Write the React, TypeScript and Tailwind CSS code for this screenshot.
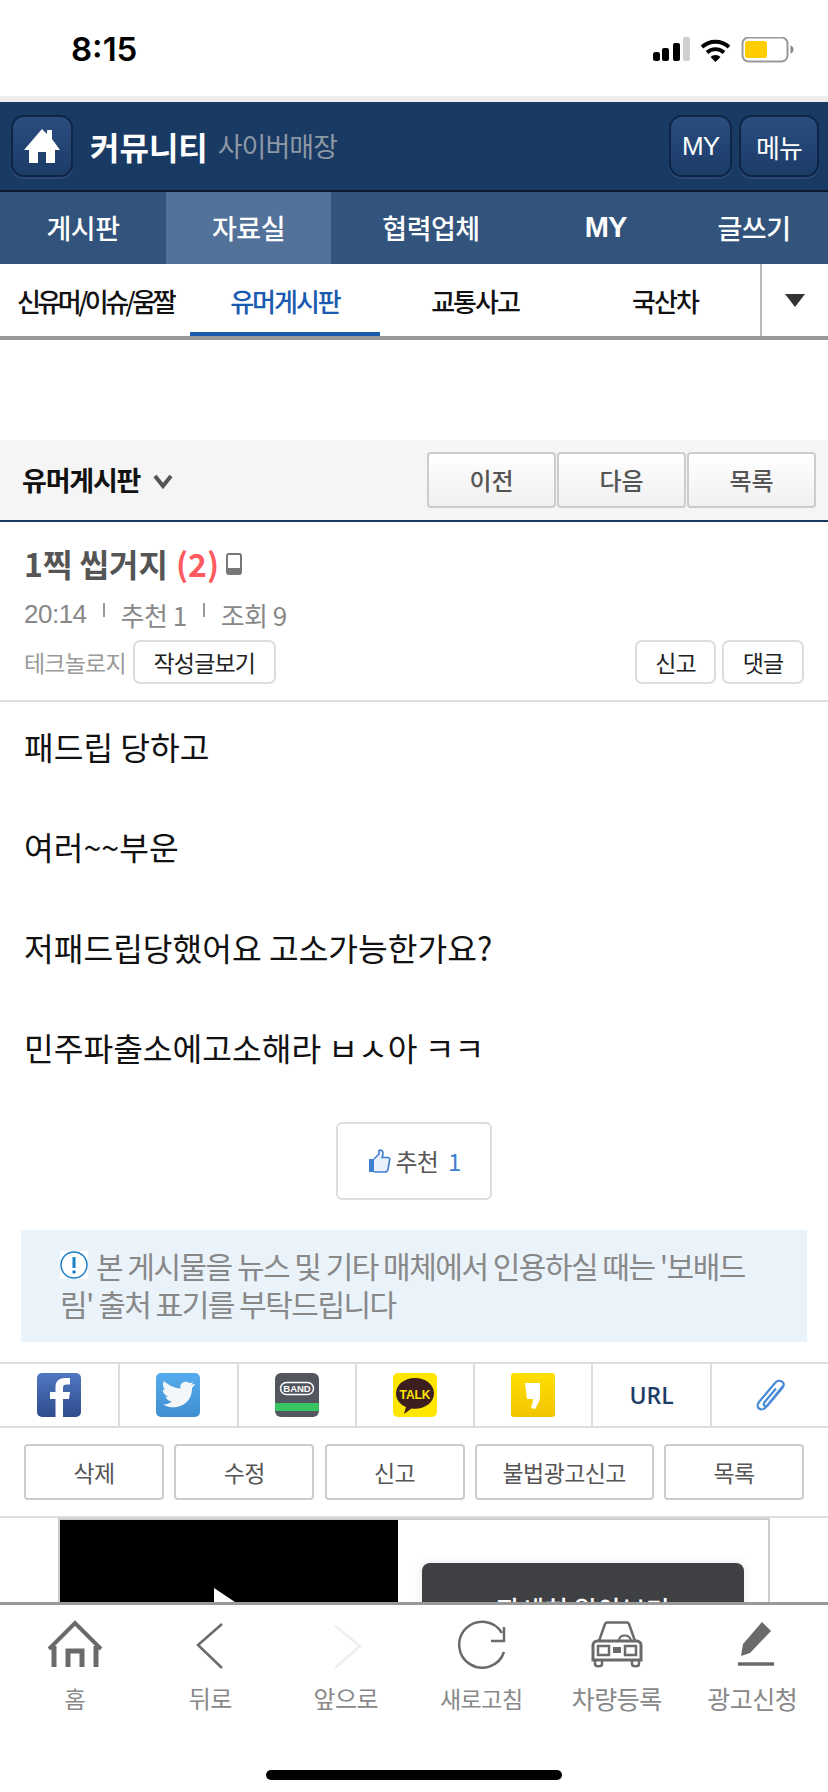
import type { ReactNode } from 'react';

const FONT = "font-['Noto_Sans_CJK_KR','Noto_Sans',sans-serif]";

const MAIN_TABS = [
  { label: '게시판', width: 'w-[166px]' },
  { label: '자료실', width: 'w-[165px]', active: true },
  { label: '협력업체', width: 'w-[200px]' },
  { label: 'MY', width: 'w-[149px]', latin: true },
  { label: '글쓰기', width: 'flex-1' },
];

const SUB_TABS = [
  { label: '신유머/이슈/움짤', tight: true },
  { label: '유머게시판', active: true },
  { label: '교통사고' },
  { label: '국산차' },
];

const POST_LINES = ['패드립 당하고', '여러~~부운', '저패드립당했어요 고소가능한가요?', '민주파출소에고소해라 ㅂㅅ아 ㅋㅋ'];

function StatusBar() {
  return (
    <div className="flex h-[96px] items-center bg-white pl-[71px] pr-[32px] pt-[4px]">
      <span className="font-['Inter',sans-serif] text-[33px] font-semibold text-black">8:15</span>
      <svg width="144" height="26" viewBox="0 0 144 26" className="ml-auto">
        <rect x="1" y="15" width="7" height="9" rx="2.500" fill="#000" />
        <rect x="10" y="11" width="7" height="13" rx="2" fill="#000" />
        <rect x="21" y="6" width="7" height="18" rx="2" fill="#000" />
        <rect x="31" y="0" width="7" height="24" rx="2" fill="#cfcfcf" />
        <path d="M50 10a20 20 0 0 1 27 0M55 15.500a12.500 12.500 0 0 1 17 0" fill="none" stroke="#000" strokeWidth="3.800" />
        <path d="M58.500 20a7 7 0 0 1 10 0l-5 5z" fill="#000" />
        <rect x="90.500" y="0.500" width="45" height="24" rx="6" fill="none" stroke="#999" strokeWidth="2" />
        <rect x="93" y="4" width="22" height="17" rx="2.500" fill="#ffcc00" />
        <path d="M138.500 8.500c2 .5 3 2.200 3 4s-1 3.500-3 4z" fill="#888" />
      </svg>
    </div>
  );
}

function NavyButton({ className, children }: { className: string; children: ReactNode }) {
  return (
    <div
      className={`flex h-[62px] items-center justify-center rounded-[13px] border-2 border-[#0f2545] bg-gradient-to-b from-[#2a4d7f] to-[#1c3c68] text-white shadow-[0_2px_0_#2a4a75] ${className}`}
    >
      {children}
    </div>
  );
}

function Header() {
  return (
    <div className="flex h-[90px] items-center border-b-2 border-[#0c1a2e] bg-[#193a63] pl-[11px] pr-[9px]">
      <NavyButton className="w-[62px]">
        <svg width="36" height="34" viewBox="0 0 36 34">
          <path d="M18 0l5 5V1h5v9l8 11h-5v13H22V23h-8v11H5V21H0z" fill="#fff" />
        </svg>
      </NavyButton>
      <span className="ml-[17px] text-[32px] font-bold text-white">커뮤니티</span>
      <span className="ml-[10px] text-[27px] tracking-[-1px] text-[#8d97a5]">사이버매장</span>
      <div className="ml-auto flex gap-[7px]">
        <NavyButton className="w-[63px] text-[26px]">
          <span className="font-['Liberation_Sans',sans-serif] tracking-[-1px]">MY</span>
        </NavyButton>
        <NavyButton className="w-[80px] text-[26px]">
          <span className="tracking-[-1px]">메뉴</span>
        </NavyButton>
      </div>
    </div>
  );
}

function MainTabs() {
  return (
    <div className="flex h-[72px] bg-[#32547c]">
      {MAIN_TABS.map((tab) => (
        <div
          key={tab.label}
          className={`flex items-center justify-center text-[27px] text-white ${tab.width} ${
            tab.active ? 'bg-[#527299]' : ''
          } ${
            tab.latin
              ? "font-['Liberation_Sans',sans-serif] text-[29px] font-bold tracking-[-1px]"
              : 'font-medium tracking-[-0.5px]'
          }`}
        >
          {tab.label}
        </div>
      ))}
    </div>
  );
}

function SubTabs() {
  return (
    <div className="flex h-[76px] border-b-4 border-[#999] bg-white">
      {SUB_TABS.map((tab) => (
        <div
          key={tab.label}
          className={`flex w-[190px] items-center justify-center whitespace-nowrap text-[26px] font-medium ${
            tab.tight ? 'tracking-[-3.5px]' : 'tracking-[-2px]'
          } ${tab.active ? 'border-b-4 border-[#1a5bb0] pt-[4px] text-[#1a5bb0]' : 'text-[#111]'}`}
        >
          {tab.label}
        </div>
      ))}
      <div className="flex flex-1 items-center justify-center border-l-2 border-[#bbb]">
        <svg width="20" height="13" viewBox="0 0 20 13">
          <path d="M0 0h20L10 13z" fill="#333" />
        </svg>
      </div>
    </div>
  );
}

function BoardBar() {
  return (
    <div className="mt-[100px] flex h-[82px] items-center border-b-2 border-[#193a63] bg-[#f5f5f5] pl-[22px] pr-[12px]">
      <span className="text-[27px] font-bold tracking-[-1.2px] text-[#111]">유머게시판</span>
      <svg width="20" height="15" viewBox="0 0 20 15" className="ml-[13px] mt-[3px]">
        <path d="M2 2l8 10 8-10" fill="none" stroke="#555" strokeWidth="4" />
      </svg>
      <div className="ml-auto flex gap-[1px]">
        {['이전', '다음', '목록'].map((label) => (
          <div
            key={label}
            className="flex h-[56px] w-[129px] items-center justify-center rounded-[4px] border-2 border-[#ccc] bg-gradient-to-b from-white to-[#f0f0f0] text-[24px] font-medium text-[#555]"
          >
            {label}
          </div>
        ))}
      </div>
    </div>
  );
}

function SmallButton({ className, children }: { className: string; children: ReactNode }) {
  return (
    <div
      className={`flex h-[44px] items-center justify-center rounded-[7px] border-2 border-[#ddd] bg-white text-[23px] tracking-[-0.8px] text-[#222] ${className}`}
    >
      {children}
    </div>
  );
}

function PostHeader() {
  return (
    <div className="border-b-2 border-[#ddd] px-[24px] pb-[16px] pt-[19px]">
      <div className="flex h-[44px] items-center">
        <span className="text-[32px] font-bold text-[#555]">1찍 씹거지</span>
        <span className="ml-[8px] text-[32px] font-bold text-[#ff5a5f]">(2)</span>
        <svg width="18" height="22" viewBox="0 0 18 22" className="ml-[6px] mt-[2px]">
          <rect x="2" y="1" width="14" height="20" rx="2" fill="none" stroke="#777" strokeWidth="2" />
          <rect x="2" y="15" width="14" height="6" rx="1" fill="#777" />
        </svg>
      </div>
      <div className="mt-[11px] flex h-[36px] items-center text-[26px] tracking-[-0.5px] text-[#888]">
        <span className="font-['Liberation_Sans',sans-serif]">20:14</span>
        <span className="mx-[16px] mb-[8px] h-[14px] w-[2px] bg-[#999]" />
        <span>추천 1</span>
        <span className="mx-[16px] mb-[8px] h-[14px] w-[2px] bg-[#999]" />
        <span>조회 9</span>
      </div>
      <div className="mt-[8px] flex items-center">
        <span className="text-[23px] tracking-[-0.8px] text-[#999]">테크놀로지</span>
        <SmallButton className="ml-[7px] w-[143px]">작성글보기</SmallButton>
        <SmallButton className="ml-auto w-[81px]">신고</SmallButton>
        <SmallButton className="ml-[6px] w-[82px]">댓글</SmallButton>
      </div>
    </div>
  );
}

function PostBody() {
  return (
    <div className="pl-[24px] pt-[19px] text-[32.3px] leading-[50.2px] text-[#111]">
      {POST_LINES.map((line) => (
        <p key={line} className="mb-[50.2px] whitespace-nowrap last:mb-0">
          {line}
        </p>
      ))}
    </div>
  );
}

function Recommend() {
  return (
    <div className="mt-[50px] flex justify-center">
      <div className="flex h-[78px] w-[156px] items-center justify-center rounded-[6px] border-2 border-[#ddd] text-[24px] tracking-[-0.8px] text-[#555]">
        <svg width="24" height="24" viewBox="0 0 24 24" className="mr-[4px]">
          <path d="M7 10h-5v13h5z" fill="#3f7fd0" />
          <path d="M7 10l5-5V1.500c2-1 4 0 4 2.500s-1 4.500-1 4.500h6c2 0 2 2 1.500 3l-1.500 9c-.4 1.500-1 2.500-3 2.500H7" fill="#e9f1fb" stroke="#3f7fd0" strokeWidth="1.600" />
        </svg>
        <span>추천</span>
        <span className="ml-[10px] text-[#3f7fd0]">1</span>
      </div>
    </div>
  );
}

function Notice() {
  return (
    <div className="mx-[21px] mt-[30px] h-[112px] bg-[#eaf2fa] pl-[39px] pt-[16px] text-[30px] leading-[38px] tracking-[-1.5px] text-[#888]">
      <div className="flex items-center whitespace-nowrap">
        <svg width="28" height="28" viewBox="0 0 28 28" className="mr-[8px] shrink-0 bg-white">
          <circle cx="14" cy="14" r="13" fill="none" stroke="#1a7fc8" strokeWidth="1.500" />
          <path d="M14 6v11" stroke="#1a7fc8" strokeWidth="3" />
          <circle cx="14" cy="21" r="1.800" fill="#1a7fc8" />
        </svg>
        본 게시물을 뉴스 및 기타 매체에서 인용하실 때는 '보배드
      </div>
      <div className="whitespace-nowrap">림' 출처 표기를 부탁드립니다</div>
    </div>
  );
}

function ShareIcon({ index }: { index: number }) {
  if (index === 0) {
    return (
      <svg width="44" height="44" viewBox="0 0 44 44">
        <defs>
          <linearGradient id="fb" x1="0" y1="0" x2="0" y2="1">
            <stop offset="0" stopColor="#4f77c0" />
            <stop offset="1" stopColor="#2f4c8e" />
          </linearGradient>
        </defs>
        <rect width="44" height="44" rx="5" fill="url(#fb)" />
        <path d="M26 44V26h6l1-7h-7v-4c0-2.500 1-3.500 3.500-3.500H33V5h-5c-6.500 0-9.500 3.500-9.500 9.500V19H13v7h5.500v18z" fill="#fff" />
      </svg>
    );
  }
  if (index === 1) {
    return (
      <svg width="44" height="44" viewBox="0 0 44 44">
        <defs>
          <linearGradient id="tw" x1="0" y1="0" x2="0" y2="1">
            <stop offset="0" stopColor="#55acee" />
            <stop offset="1" stopColor="#3f8fd0" />
          </linearGradient>
        </defs>
        <rect width="44" height="44" rx="5" fill="url(#tw)" />
        <path d="M38 11c-1 .5-2 .8-3.500 1 1.200-.8 2.200-2 2.700-3.300-1.200.7-2.500 1.200-3.800 1.500-2.800-3-8.500-1.200-9 3-.1.800 0 1.500.1 2.200C18.500 15 12 12 8 8c-2 3.500-.8 7 1.500 9-1 0-2-.3-2.800-.8 0 3.500 2.500 6.500 5.500 7.200-1 .3-2 .3-2.800.1 1 2.800 3.500 4.800 6.500 5-2.800 2.200-6.200 3.200-9.400 2.800 12 7.500 30 1 29.500-16.500 1.200-.9 2.200-2 3-3.300z" fill="#f4f7fa" />
      </svg>
    );
  }
  if (index === 2) {
    return (
      <svg width="44" height="44" viewBox="0 0 44 44">
        <rect width="44" height="44" rx="6" fill="#54565f" />
        <rect y="30" width="44" height="8" fill="#39c463" />
        <rect x="5.500" y="9.500" width="33" height="12" rx="6" fill="none" stroke="#fff" strokeWidth="1.500" />
        <text x="22" y="19" textAnchor="middle" fontSize="9.500" fontWeight="700" fill="#fff" fontFamily="Liberation Sans">BAND</text>
      </svg>
    );
  }
  if (index === 3) {
    return (
      <svg width="44" height="44" viewBox="0 0 44 44">
        <rect width="44" height="44" rx="5" fill="#ffe600" />
        <path d="M22 5c-11 0-19 7-19 15.500 0 6 4 11 10 13.500l-2 7 7.500-5.500c1 .2 2.300.3 3.500.3 11 0 19-7 19-15.500S33 5 22 5z" fill="#3c1e1e" />
        <text x="22" y="26" textAnchor="middle" fontSize="12" fontWeight="700" fill="#ffe600" fontFamily="Liberation Sans">TALK</text>
      </svg>
    );
  }
  if (index === 4) {
    return (
      <svg width="44" height="44" viewBox="0 0 44 44">
        <defs>
          <linearGradient id="ks" x1="0" y1="0" x2="0" y2="1">
            <stop offset="0" stopColor="#ffdf00" />
            <stop offset="1" stopColor="#f2c500" />
          </linearGradient>
        </defs>
        <rect width="44" height="44" rx="3" fill="url(#ks)" />
        <path d="M14 10h15v13c0 4-2 8-5 13l-4-1c1-3 2-6 2-9h-6z" fill="#fff" />
      </svg>
    );
  }
  if (index === 5) {
    return <span className="font-['Open_Sans',sans-serif] text-[23px] font-semibold text-[#1d3d68]">URL</span>;
  }
  return (
    <svg width="32" height="34" viewBox="0 0 32 34">
      <path d="M27 6L10 27c-2 2.500-5 3-7 1.500s-1.500-4.500 0-6.500L19 3c2-2.500 5-2.800 7-1.300s2 4 .5 6L12 25c-1 1.300-2.500 1.500-3.500.7s-1-2.200 0-3.500L20 8.500" fill="none" stroke="#4a8ad6" strokeWidth="2.200" transform="translate(2 2)" />
    </svg>
  );
}

function ShareRow() {
  return (
    <div className="mt-[20px] grid h-[66px] grid-cols-7 border-y-2 border-[#ddd]">
      {[0, 1, 2, 3, 4, 5, 6].map((i) => (
        <div key={i} className="flex items-center justify-center border-l-2 border-[#ddd] first:border-l-0">
          <ShareIcon index={i} />
        </div>
      ))}
    </div>
  );
}

function ActionRow() {
  const buttons = [
    { label: '삭제', width: 'w-[140px]' },
    { label: '수정', width: 'w-[140px]' },
    { label: '신고', width: 'w-[140px]' },
    { label: '불법광고신고', width: 'w-[179px]' },
    { label: '목록', width: 'w-[140px]' },
  ];
  return (
    <div className="flex h-[90px] items-center justify-between border-b-2 border-[#ddd] px-[24px]">
      {buttons.map((b) => (
        <div
          key={b.label}
          className={`flex h-[56px] items-center justify-center rounded-[4px] border-2 border-[#ccc] text-[23px] tracking-[-0.6px] text-[#555] ${b.width}`}
        >
          {b.label}
        </div>
      ))}
    </div>
  );
}

function AdBlock() {
  return (
    <div className="mx-[58px] flex h-[240px] border-x-2 border-t-2 border-[#ccc]">
      <div className="flex w-[338px] justify-center bg-black pt-[68px]">
        <svg width="30" height="40" viewBox="0 0 30 40">
          <path d="M0 0l30 20L0 40z" fill="#fff" />
        </svg>
      </div>
      <div className="ml-[24px] mt-[43px] flex h-[90px] w-[322px] justify-center rounded-[8px] bg-[#3e4044] pt-[26px] text-[26px] font-medium text-white shadow-[0_0_10px_rgba(0,0,0,0.1)]">
        자세히 알아보기
      </div>
    </div>
  );
}

function BottomIcon({ index }: { index: number }) {
  const gray = '#6a6a6a';
  if (index === 0) {
    return (
      <svg width="64" height="52" viewBox="0 0 64 52">
        <path d="M6 30L32 4l26 26" fill="none" stroke={gray} strokeWidth="4" />
        <path d="M11 27v21M53 27v21" stroke={gray} strokeWidth="5" />
        <path d="M25 48V32h14v16" fill="none" stroke={gray} strokeWidth="5" />
      </svg>
    );
  }
  if (index === 1) {
    return (
      <svg width="64" height="52" viewBox="0 0 64 52">
        <path d="M44 5L20 26l24 23" fill="none" stroke={gray} strokeWidth="2.500" />
      </svg>
    );
  }
  if (index === 2) {
    return (
      <svg width="64" height="52" viewBox="0 0 64 52">
        <path d="M21 7l25 20-25 22" fill="none" stroke="#eee" strokeWidth="2.500" />
      </svg>
    );
  }
  if (index === 3) {
    return (
      <svg width="64" height="52" viewBox="0 0 64 52">
        <path d="M53 14A23 23 0 1 0 55 33" fill="none" stroke={gray} strokeWidth="2.500" />
        <path d="M55 8v14H42" fill="none" stroke={gray} strokeWidth="2.500" />
      </svg>
    );
  }
  if (index === 4) {
    return (
      <svg width="64" height="52" viewBox="0 0 64 52">
        <path d="M14 22l6-17c.5-1 1-1.500 2-1.500h20c1 0 1.500.5 2 1.500l6 17" fill="none" stroke={gray} strokeWidth="2.500" />
        <path d="M8 41V26c0-2 2-4 4-4h40c2 0 4 2 4 4v15z" fill="none" stroke={gray} strokeWidth="3" />
        <path d="M34 21c1-6 10-6 12 0" fill="none" stroke={gray} strokeWidth="2" />
        <rect x="13" y="27" width="11" height="9" fill="none" stroke={gray} strokeWidth="2.500" />
        <rect x="40" y="27" width="11" height="9" fill="none" stroke={gray} strokeWidth="2.500" />
        <rect x="28" y="28" width="8" height="6" fill={gray} />
        <path d="M10 41v4c0 3 7 3 7 0v-4M47 41v4c0 3 7 3 7 0v-4" fill="none" stroke={gray} strokeWidth="2.500" />
      </svg>
    );
  }
  return (
    <svg width="64" height="52" viewBox="0 0 64 52" className="ml-[8px]">
      <path d="M17 37l2-12L38 3l9 9-21 22z" fill={gray} />
      <path d="M14 45h36" stroke={gray} strokeWidth="3.500" />
    </svg>
  );
}

function BottomNav() {
  const items = [
    { label: '홈', style: 'text-[23px] -mt-[2px]' },
    { label: '뒤로', style: 'text-[24px]' },
    { label: '앞으로', style: 'text-[24px]' },
    { label: '새로고침', style: 'text-[23px] -mt-[3px]' },
    { label: '차량등록', style: 'text-[25px] -mt-[3px]' },
    { label: '광고신청', style: 'text-[25px] -mt-[3px]' },
  ];
  return (
    <div className="relative z-10 h-[190px] shrink-0 border-t-[3px] border-[#999] bg-white pl-[7px] pr-[8px] pt-[14px]">
      <div className="grid h-[98px] grid-cols-6">
        {items.map((item, i) => (
          <div key={item.label} className="flex flex-col items-center">
            <BottomIcon index={i} />
            <span className={`mt-[11px] leading-[32px] tracking-[-0.5px] text-[#888] ${item.style}`}>{item.label}</span>
          </div>
        ))}
      </div>
      <div className="mx-auto mt-[53px] h-[10px] w-[296px] rounded-full bg-black" />
    </div>
  );
}

export default function App() {
  return (
    <div className={`flex h-[1792px] flex-col overflow-hidden bg-white ${FONT}`}>
      <StatusBar />
      <div className="h-[6px] bg-[#eee]" />
      <Header />
      <MainTabs />
      <div className="min-h-0 flex-1 overflow-hidden">
        <SubTabs />
        <BoardBar />
        <PostHeader />
        <PostBody />
        <Recommend />
        <Notice />
        <ShareRow />
        <ActionRow />
        <AdBlock />
      </div>
      <BottomNav />
    </div>
  );
}
